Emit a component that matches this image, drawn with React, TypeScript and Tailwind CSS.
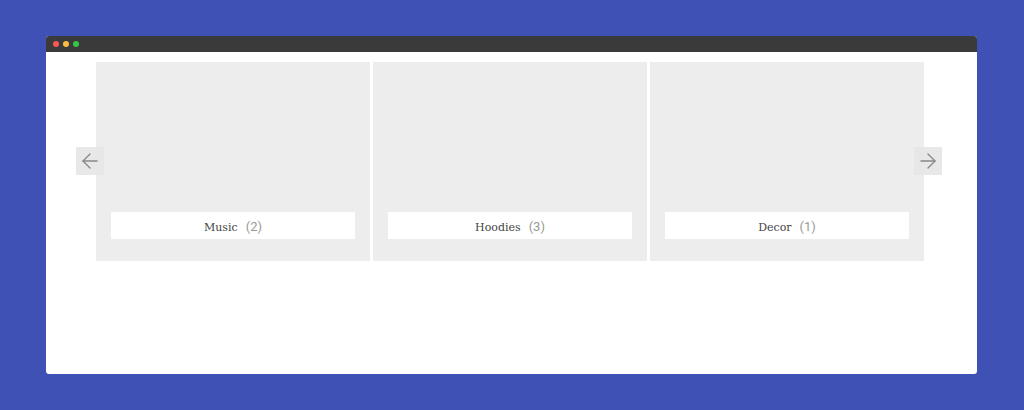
import { ArrowLeft, ArrowRight } from "lucide-react"

const categories = [
  { name: "Music", count: 2 },
  { name: "Hoodies", count: 3 },
  { name: "Decor", count: 1 },
]

export default function App() {
  return (
    <div className="h-[410px] w-[1024px] bg-[#3f51b5] pl-[46px] pt-[36px]">
      <div className="flex h-[338px] w-[931px] flex-col overflow-hidden rounded-[3px] bg-white">
        {/* title bar */}
        <div className="flex h-[16px] items-center gap-[4px] bg-[#3a3a3a] pl-[7px]">
          <span className="h-[6px] w-[6px] rounded-full bg-[#fc5753]" />
          <span className="h-[6px] w-[6px] rounded-full bg-[#fdbc40]" />
          <span className="h-[6px] w-[6px] rounded-full bg-[#33c748]" />
        </div>

        {/* category carousel */}
        <div className="relative ml-[50px] mt-[10px] w-[828px]">
          <div className="grid grid-cols-3 gap-[3px]">
            {categories.map((c) => (
              <div key={c.name} className="flex h-[199px] flex-col justify-end bg-[#ededed] px-[15px] pb-[22px]">
                <div className="flex h-[27px] items-baseline justify-center gap-[8px] bg-white pt-[5px]">
                  <span className="font-['DejaVu_Serif',serif] text-[11px] text-[#444]">{c.name}</span>
                  <span className="font-['Roboto',sans-serif] text-[13px] text-[#999]">({c.count})</span>
                </div>
              </div>
            ))}
          </div>
          <button className="absolute left-[-20px] top-[85px] flex h-[28px] w-[28px] items-center justify-center bg-[#e6e6e6]/90">
            <ArrowLeft className="h-[24px] w-[24px] text-[#888]" strokeWidth={1.4} />
          </button>
          <button className="absolute right-[-18px] top-[85px] flex h-[28px] w-[28px] items-center justify-center bg-[#e6e6e6]/90">
            <ArrowRight className="h-[24px] w-[24px] text-[#888]" strokeWidth={1.4} />
          </button>
        </div>
      </div>
    </div>
  )
}
